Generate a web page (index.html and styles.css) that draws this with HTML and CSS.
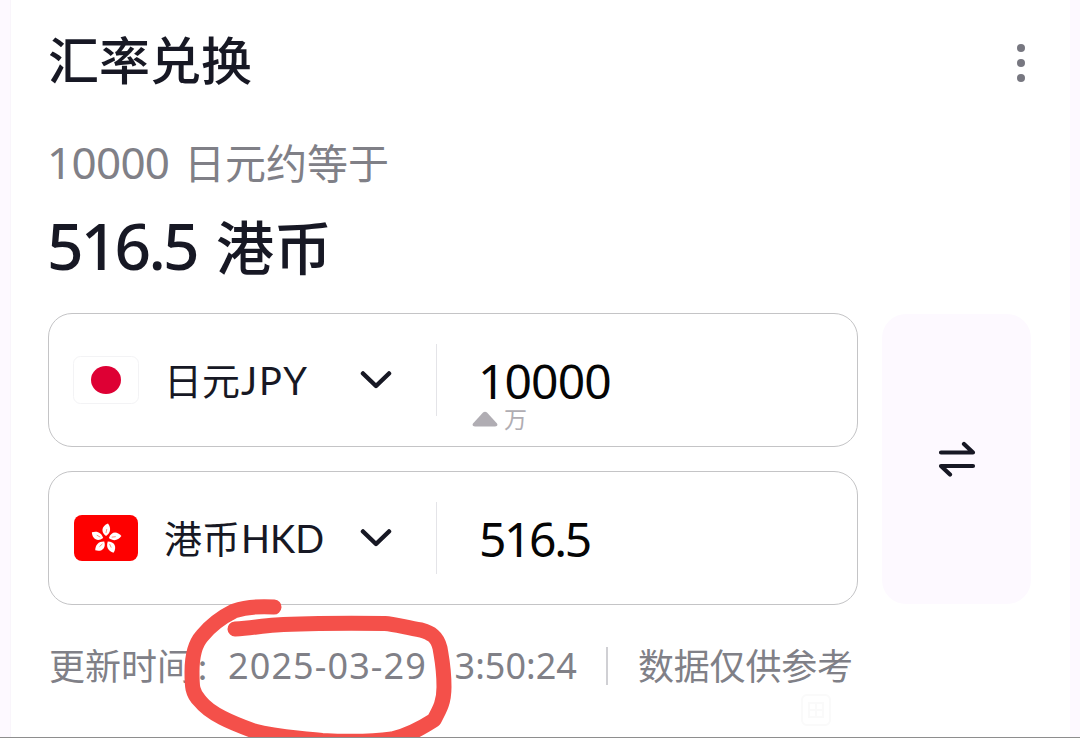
FILE: index.html
```html
<!DOCTYPE html>
<html lang="zh-CN">
<head>
    <meta charset="UTF-8">
    <meta name="viewport" content="width=device-width, initial-scale=1.0">
    <title>汇率兑换</title>
    <link rel="stylesheet" href="styles.css">
</head>
<body>

    <div class="card">
        <div class="card-header">
            <h2>汇率兑换</h2>
            <div class="more"><i></i><i></i><i></i></div>
        </div>

        <p class="summary"><span class="num">10000</span>日元约等于</p>
        <p class="result"><span class="num">516.5</span>港币</p>

        <div class="converter">
            <div class="rows">
                <div class="row">
                    <div class="currency">
                        <svg class="flag" viewBox="0 0 66 48">
                            <rect x="0.5" y="0.5" width="65" height="47" rx="7" fill="#fff" stroke="#f3f3f5"/>
                            <ellipse cx="33" cy="24" rx="15" ry="14" fill="#de0034"/>
                        </svg>
                        <span class="name">日元<span class="code jpy">JPY</span></span>
                        <svg class="arrow" viewBox="0 0 32 20"><path d="M3 3.500L16 16L29 3.500"/></svg>
                    </div>
                    <div class="amount">
                        <span class="num">10000</span>
                        <div class="unit">
                            <svg viewBox="0 0 26 16"><path d="M11 1.500Q13 0 15 1.500L25 12.500Q26.500 15.500 23 15.500H3Q-0.500 15.500 1 12.500Z"/></svg>
                            <span>万</span>
                        </div>
                    </div>
                </div>

                <div class="row">
                    <div class="currency">
                        <svg class="flag" viewBox="0 0 66 48">
                            <defs>
                                <g id="petal">
                                    <path d="M0 -3C-5.500 -7 -4.500 -13 2 -15.500C5.500 -11 4.500 -6 0 -3Z" fill="#fff"/>
                                    <path d="M0 -6L0.800 -10" stroke="#ff8a7a" stroke-width="0.900"/>
                                </g>
                            </defs>
                            <rect x="1" y="1" width="64" height="46" rx="8" fill="#fe0000"/>
                            <g transform="translate(33 25)">
                                <use href="#petal"/>
                                <use href="#petal" transform="rotate(72)"/>
                                <use href="#petal" transform="rotate(144)"/>
                                <use href="#petal" transform="rotate(216)"/>
                                <use href="#petal" transform="rotate(288)"/>
                            </g>
                        </svg>
                        <span class="name">港币<span class="code">HKD</span></span>
                        <svg class="arrow" viewBox="0 0 32 20"><path d="M3 3.500L16 16L29 3.500"/></svg>
                    </div>
                    <div class="amount">
                        <span class="num decimal">516.5</span>
                    </div>
                </div>
            </div>

            <div class="swap">
                <svg viewBox="0 0 38 36"><path d="M3 11.500H35L26 3M35 25H3L12 33.500"/></svg>
            </div>
        </div>

        <div class="footer">
            <span class="label">更新时间<span class="colon">:</span></span>
            <span class="date">2025-03-29</span>
            <span class="time">13:50:24</span>
            <span class="line"></span>
            <span class="note">数据仅供参考</span>
        </div>
    </div>

    <svg class="stamp" viewBox="0 0 30 32">
        <rect x="1" y="1" width="28" height="30" rx="5"/>
        <path d="M8 9H22V23H8ZM8 16H22M15 9V23"/>
    </svg>

    <!-- red pen mark around the date -->
    <svg class="mark" viewBox="0 0 280 148">
        <path d="M94 17C79 16 63 18 54 21C42 27 30 36 22 46C14 55 12 68 12 82C12 96 12 103 20 111C30 124 52 133 74 141C96 147 112 147 142 150.500C170 152 190 152 212 149C230 145 243 137 254 130C260 119 264 112 264 97C264 78 262 70 260 58C257 46 251 43 241 40C224 37 214 34 205 33.500C160 33 130 33 96 35C80 36 72 38 55 39"/>
    </svg>

</body>
</html>
```
FILE: styles.css
```css
body {
    margin: 0;
    height: 738px;
    position: relative;
    overflow: hidden;
    box-sizing: border-box;
    padding: 0 10px 0 10px;
    border-bottom: 1px solid #8e8e8e;
    background-color: #fdf9ff;
    font-family: Lato, "Noto Sans CJK SC", sans-serif;
    color: #171824;
}

.card {
    height: 737px;
    box-sizing: border-box;
    padding: 23px 38px 0 37px;
    background-color: #fff;
    border-left: 1px solid #f9f5fb;
}

.card-header {
    display: flex;
    justify-content: space-between;
    align-items: center;
    height: 76px;
}

h2 {
    margin: 0;
    font-size: 51px;
    font-weight: 500;
    line-height: 76px;
}

.more {
    display: flex;
    flex-direction: column;
    gap: 7px;
    margin: 3px 7px 0 0;
}

.more i {
    width: 8px;
    height: 8px;
    border-radius: 50%;
    background-color: #777780;
}

.num,
.date,
.time {
    font-family: "Noto Sans", sans-serif;
}

.summary {
    display: flex;
    align-items: baseline;
    margin: 33px 0 0;
    font-size: 41px;
    line-height: 60px;
    color: #808087;
}

.summary .num {
    width: 137px;
    margin-left: -1px;
    font-size: 44px;
    letter-spacing: -0.7px;
}

.result {
    display: flex;
    align-items: baseline;
    margin: 12px 0 0;
    font-size: 58px;
    font-weight: 500;
    line-height: 80px;
}

.result .num {
    width: 169px;
    margin-left: -1px;
    font-size: 64px;
    letter-spacing: -2.8px;
}

.converter {
    display: flex;
    gap: 24px;
    margin-top: 25px;
}

.rows {
    display: flex;
    flex-direction: column;
    gap: 24px;
    width: 810px;
}

.row {
    display: flex;
    align-items: center;
    height: 134px;
    box-sizing: border-box;
    border: 1px solid #c4c4c6;
    border-radius: 24px;
}

.currency {
    display: flex;
    align-items: center;
    width: 388px;
    height: 72px;
    box-sizing: border-box;
    padding-left: 24px;
    border-right: 1px solid #e4e4e8;
}

.flag {
    width: 66px;
    height: 48px;
}

.name {
    width: 196px;
    margin-left: 25px;
    font-size: 38px;
    line-height: 60px;
    white-space: nowrap;
}

.code {
    margin-left: 1px;
}

.jpy {
    letter-spacing: 2px;
}

.arrow {
    width: 32px;
    height: 20px;
}

.arrow path {
    fill: none;
    stroke: #171824;
    stroke-width: 4.5;
    stroke-linecap: round;
    stroke-linejoin: round;
}

.amount {
    position: relative;
    padding-left: 41px;
    font-size: 48px;
    line-height: 60px;
    color: #050505;
}

.amount .num {
    position: relative;
    top: 1px;
    letter-spacing: -0.9px;
}

.amount .decimal {
    left: 1px;
    letter-spacing: -2.4px;
}

.unit {
    position: absolute;
    left: 35px;
    top: 57px;
    display: flex;
    align-items: center;
    gap: 6px;
    font-size: 23px;
    line-height: 24px;
    color: #b0adb3;
}

.unit svg {
    width: 26px;
    height: 16px;
    fill: #b0adb3;
}

.swap {
    display: flex;
    align-items: center;
    justify-content: center;
    width: 149px;
    height: 290px;
    margin-top: 1px;
    border-radius: 24px;
    background-color: #fdf9ff;
}

.swap svg {
    width: 38px;
    height: 36px;
    fill: none;
    stroke: #171824;
    stroke-width: 4.2;
    stroke-linecap: round;
    stroke-linejoin: round;
}

.footer {
    display: flex;
    align-items: center;
    height: 60px;
    margin-top: 31px;
    padding-left: 1px;
    font-size: 36px;
    line-height: 60px;
    color: #808087;
    white-space: nowrap;
}

.label {
    width: 179px;
}

.colon {
    margin-left: 5px;
}

.date {
    width: 206px;
    letter-spacing: 1.1px;
}

.time {
    width: 142px;
}

.line {
    width: 2px;
    height: 38px;
    margin: 0 30px;
    background-color: #d0d0d4;
}

.note {
    letter-spacing: -0.2px;
}

.stamp {
    position: absolute;
    left: 801px;
    top: 694px;
    width: 30px;
    height: 32px;
    fill: none;
    stroke: #fafafa;
    stroke-width: 2;
}

.mark {
    position: absolute;
    left: 180px;
    top: 590px;
    width: 280px;
    height: 148px;
    fill: none;
    stroke: #f4504a;
    stroke-width: 15;
    stroke-linecap: round;
    stroke-linejoin: round;
}
```
